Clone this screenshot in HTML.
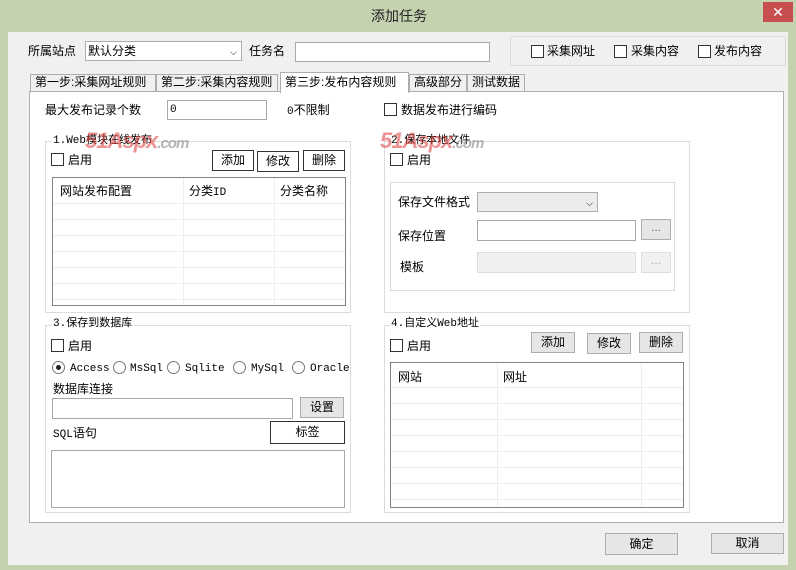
<!DOCTYPE html><html><head><meta charset="utf-8"><style>
*{margin:0;padding:0;box-sizing:border-box}
body{width:796px;height:570px;position:relative;overflow:hidden;background:#c4d2b0;font-family:"Liberation Sans","Noto Sans CJK SC",sans-serif;font-size:12px;color:#000}
.a{position:absolute}
.t{position:absolute;line-height:14px;white-space:nowrap}
.in{position:absolute;background:#fff;border:1px solid #a9a9a9}
.btn{position:absolute;background:#e6e6e6;border:1px solid #adadad;text-align:center;line-height:18px}
.btnd{position:absolute;background:#fff;border:1px solid #333;text-align:center;line-height:18px}
.cb{position:absolute;width:13px;height:13px;border:1px solid #333;background:#fff}
.grp{position:absolute;border:1px solid #dcdcdc}
.gl{position:absolute;background:#fff;padding:0 1px;line-height:12px;font-size:11px;font-family:"Liberation Mono","Noto Sans CJK SC",monospace}
.tab{position:absolute;background:#f0f0f0;border:1px solid #adadad;border-bottom:none;line-height:15px;padding-left:4px}
.rd{position:absolute;width:13px;height:13px;border:1px solid #777;border-radius:50%;background:#fff}
.mono{font-family:"Liberation Mono","Noto Sans CJK SC",monospace;font-size:11px}
.wm{position:absolute;font:italic bold 22px "Liberation Sans",sans-serif;color:rgba(220,60,60,.55);letter-spacing:-1px}
.wm span{color:rgba(120,120,120,.55);font-size:15px}
.row{position:absolute;left:0;right:0;height:1px;background:#eeeeee}
</style></head><body>
<div class="a" style="left:8px;top:32px;width:780px;height:533px;background:#f0f0f0"></div>
<div class="t" style="left:371px;top:9px;font-size:14px;color:#222">添加任务</div>
<div class="a" style="left:763px;top:2px;width:30px;height:20px;background:#c74f4f;color:#fff;text-align:center;line-height:20px;font-size:14px">✕</div>

<div class="t" style="left:28px;top:44px">所属站点</div>
<div class="in" style="left:85px;top:41px;width:157px;height:20px;border-color:#adadad"><span class="t" style="left:2px;top:2px">默认分类</span><span class="t" style="right:4px;top:3px;font-size:9px">⌵</span></div>
<div class="t" style="left:249px;top:44px">任务名</div>
<div class="in" style="left:295px;top:42px;width:195px;height:20px"></div>
<div class="grp" style="left:510px;top:36px;width:276px;height:30px;border-radius:2px"></div>
<div class="cb" style="left:531px;top:45px"></div><div class="t" style="left:547px;top:44px">采集网址</div>
<div class="cb" style="left:614px;top:45px"></div><div class="t" style="left:631px;top:44px">采集内容</div>
<div class="cb" style="left:698px;top:45px"></div><div class="t" style="left:714px;top:44px">发布内容</div>

<div class="tab" style="left:30px;top:74px;width:126px;height:18px">第一步:采集网址规则</div>
<div class="tab" style="left:156px;top:74px;width:122px;height:18px">第二步:采集内容规则</div>
<div class="tab" style="left:409px;top:74px;width:58px;height:18px">高级部分</div>
<div class="tab" style="left:467px;top:74px;width:58px;height:18px">测试数据</div>
<div class="a" style="left:29px;top:91px;width:755px;height:432px;background:#fff;border:1px solid #adadad"></div>
<div class="tab" style="left:280px;top:72px;width:129px;height:21px;background:#fff;padding-top:2px">第三步:发布内容规则</div>

<div class="t" style="left:45px;top:103px">最大发布记录个数</div>
<div class="in" style="left:167px;top:100px;width:100px;height:20px"><span class="t mono" style="left:2px;top:2px">0</span></div>
<div class="t" style="left:287px;top:103px"><span class="mono">0</span>不限制</div>
<div class="cb" style="left:384px;top:103px"></div><div class="t" style="left:401px;top:103px">数据发布进行编码</div>

<div class="grp" style="left:45px;top:141px;width:306px;height:172px"></div>
<div class="gl" style="left:52px;top:135px">1.Web模块在线发布</div>
<div class="cb" style="left:51px;top:153px"></div><div class="t" style="left:68px;top:153px">启用</div>
<div class="btnd" style="left:212px;top:150px;width:42px;height:21px">添加</div>
<div class="btnd" style="left:257px;top:151px;width:42px;height:21px">修改</div>
<div class="btnd" style="left:303px;top:150px;width:42px;height:21px">删除</div>
<div class="a" style="left:52px;top:177px;width:294px;height:129px;border:1px solid #828282;background:#fff;overflow:hidden">
<div class="row" style="top:25px"></div><div class="row" style="top:41px"></div><div class="row" style="top:57px"></div><div class="row" style="top:73px"></div><div class="row" style="top:89px"></div><div class="row" style="top:105px"></div><div class="row" style="top:121px"></div>
<div class="a" style="left:130px;top:0;width:1px;height:129px;background:#eee"></div><div class="a" style="left:221px;top:0;width:1px;height:129px;background:#eee"></div>
<span class="t" style="left:7px;top:6px">网站发布配置</span><span class="t" style="left:136px;top:6px">分类<span class="mono">ID</span></span><span class="t" style="left:227px;top:6px">分类名称</span></div>
<div class="wm" style="left:85px;top:128px">51Aspx<span>.com</span></div>

<div class="grp" style="left:384px;top:141px;width:306px;height:172px"></div>
<div class="gl" style="left:390px;top:135px">2.保存本地文件</div>
<div class="cb" style="left:390px;top:153px"></div><div class="t" style="left:407px;top:153px">启用</div>
<div class="grp" style="left:390px;top:182px;width:285px;height:109px"></div>
<div class="t" style="left:398px;top:195px">保存文件格式</div>
<div class="a" style="left:477px;top:192px;width:121px;height:20px;background:#ececec;border:1px solid #adadad"><span class="t" style="right:4px;top:3px;font-size:9px">⌵</span></div>
<div class="t" style="left:398px;top:229px">保存位置</div>
<div class="in" style="left:477px;top:220px;width:159px;height:21px"></div>
<div class="btn" style="left:641px;top:219px;width:30px;height:21px;line-height:14px;color:#666">...</div>
<div class="t" style="left:400px;top:260px">模板</div>
<div class="a" style="left:477px;top:252px;width:159px;height:21px;background:#f0f0f0;border:1px solid #ddd"></div>
<div class="a" style="left:641px;top:252px;width:30px;height:21px;background:#f0f0f0;border:1px solid #ddd;text-align:center;color:#aaa;line-height:14px">...</div>
<div class="wm" style="left:380px;top:128px">51Aspx<span>.com</span></div>

<div class="grp" style="left:45px;top:325px;width:306px;height:188px"></div>
<div class="gl" style="left:52px;top:318px">3.保存到数据库</div>
<div class="cb" style="left:51px;top:339px"></div><div class="t" style="left:68px;top:339px">启用</div>
<div class="rd" style="left:52px;top:361px"><div class="a" style="left:3px;top:3px;width:5px;height:5px;border-radius:50%;background:#222"></div></div><div class="t mono" style="left:70px;top:362px">Access</div>
<div class="rd" style="left:113px;top:361px"></div><div class="t mono" style="left:130px;top:362px">MsSql</div>
<div class="rd" style="left:167px;top:361px"></div><div class="t mono" style="left:185px;top:362px">Sqlite</div>
<div class="rd" style="left:233px;top:361px"></div><div class="t mono" style="left:251px;top:362px">MySql</div>
<div class="rd" style="left:292px;top:361px"></div><div class="t mono" style="left:310px;top:362px">Oracle</div>
<div class="t" style="left:53px;top:382px">数据库连接</div>
<div class="in" style="left:52px;top:398px;width:241px;height:21px"></div>
<div class="btn" style="left:300px;top:397px;width:44px;height:21px">设置</div>
<div class="t" style="left:53px;top:426px"><span class="mono">SQL</span>语句</div>
<div class="btnd" style="left:270px;top:421px;width:75px;height:23px;line-height:21px">标签</div>
<div class="in" style="left:51px;top:450px;width:294px;height:58px"></div>

<div class="grp" style="left:384px;top:325px;width:306px;height:188px"></div>
<div class="gl" style="left:390px;top:318px">4.自定义Web地址</div>
<div class="cb" style="left:390px;top:339px"></div><div class="t" style="left:407px;top:339px">启用</div>
<div class="btn" style="left:531px;top:332px;width:44px;height:21px">添加</div>
<div class="btn" style="left:587px;top:333px;width:44px;height:21px">修改</div>
<div class="btn" style="left:639px;top:332px;width:44px;height:21px">删除</div>
<div class="a" style="left:390px;top:362px;width:294px;height:146px;border:1px solid #828282;background:#fff;overflow:hidden">
<div class="row" style="top:24px"></div><div class="row" style="top:40px"></div><div class="row" style="top:56px"></div><div class="row" style="top:72px"></div><div class="row" style="top:88px"></div><div class="row" style="top:104px"></div><div class="row" style="top:120px"></div><div class="row" style="top:136px"></div>
<div class="a" style="left:106px;top:0;width:1px;height:146px;background:#eee"></div><div class="a" style="left:250px;top:0;width:1px;height:146px;background:#eee"></div>
<span class="t" style="left:7px;top:7px">网站</span><span class="t" style="left:112px;top:7px">网址</span></div>

<div class="btn" style="left:605px;top:533px;width:73px;height:22px;line-height:20px">确定</div>
<div class="btn" style="left:711px;top:533px;width:73px;height:21px;line-height:19px">取消</div>
</body></html>
